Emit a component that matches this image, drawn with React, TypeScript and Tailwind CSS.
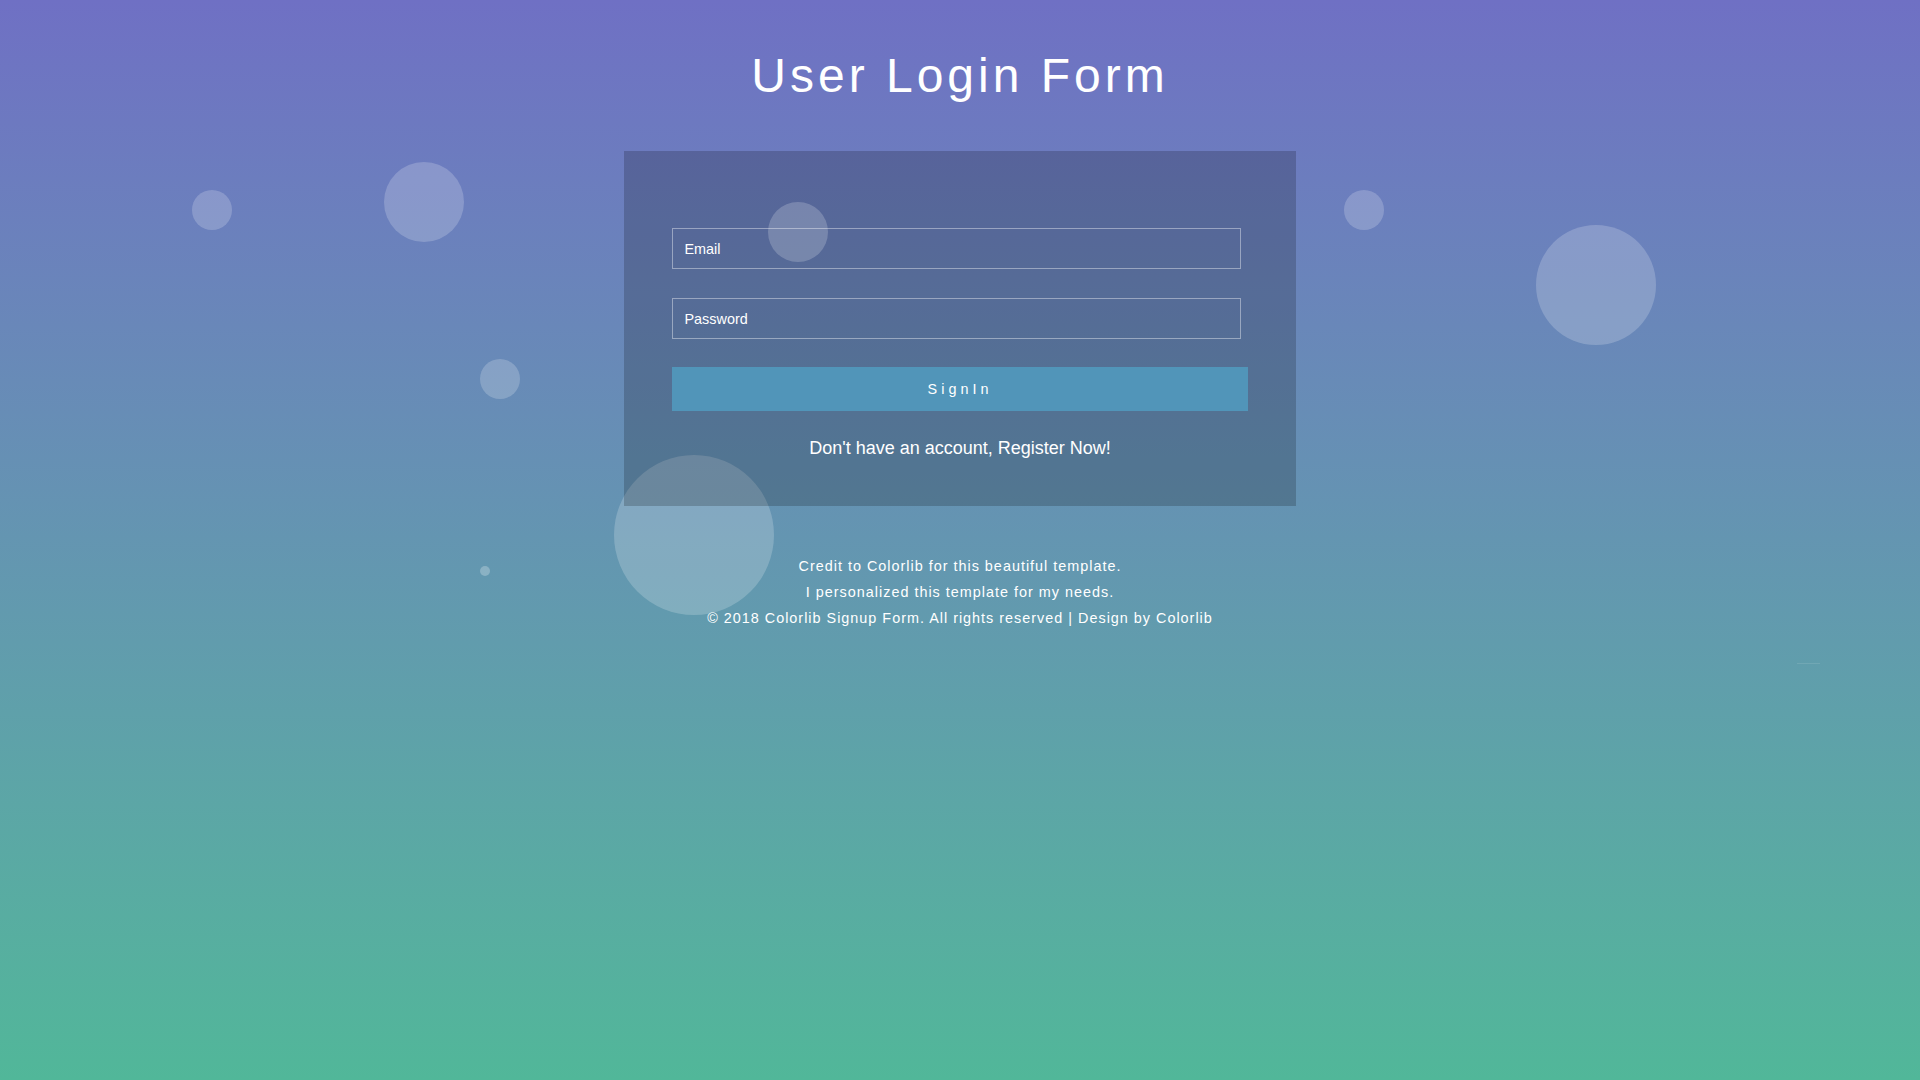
import React from "react";

const bubbleAbove = [
  { l: 192, t: 190, d: 40, o: "bg-white/20" },
  { l: 384, t: 162, d: 80, o: "bg-white/20" },
  { l: 480, t: 359, d: 40, o: "bg-white/20" },
  { l: 768, t: 202, d: 60, o: "bg-white/20" },
  { l: 480, t: 566, d: 10, o: "bg-white/25" },
  { l: 1344, t: 190, d: 40, o: "bg-white/20" },
  { l: 1536, t: 225, d: 120, o: "bg-white/20" },
];

export default function App() {
  return (
    <div
      className="relative w-full h-[1080px] overflow-hidden bg-gradient-to-b from-[#6f70c4] to-[#51b799] text-white"
      style={{ fontFamily: '"Liberation Sans", Arial, Helvetica, sans-serif' }}
    >
      {/* bubble behind the form */}
      <div className="absolute left-[614px] top-[455px] w-[160px] h-[160px] rounded-full bg-white/20" />

      <div className="relative flex flex-col items-center">
        <h1 className="pt-[48px] text-[48px] leading-[56px] tracking-[4px] font-normal text-white">
          User Login Form
        </h1>

        <div className="mt-[47px] w-[672px] h-[355px] bg-[rgba(0,0,0,0.19)] px-[48px] pt-[77px]">
          <form className="flex flex-col" onSubmit={(e) => e.preventDefault()}>
            <input
              type="text"
              placeholder="Email"
              className="block w-[569px] h-[41px] border border-white/40 bg-transparent px-[11.5px] text-[14.4px] text-white placeholder:text-white outline-none"
            />
            <input
              type="password"
              placeholder="Password"
              className="block mt-[29px] w-[569px] h-[41px] border border-white/40 bg-transparent px-[11.5px] text-[14.4px] text-white placeholder:text-white outline-none"
            />
            <button
              type="submit"
              className="mt-[28px] w-[576px] h-[44px] pt-[2px] bg-[#5195b9] text-[14.4px] tracking-[4px] text-white"
            >
              SignIn
            </button>
          </form>
          <p className="mt-[25px] text-center text-[18px] leading-[24px] text-white">
            Don't have an account, Register Now!
          </p>
        </div>

        <div className="mt-[48px] text-center text-[14.4px] leading-[25.92px] tracking-[1px] text-white">
          <p>Credit to Colorlib for this beautiful template.</p>
          <p>I personalized this template for my needs.</p>
          <p>© 2018 Colorlib Signup Form. All rights reserved | Design by Colorlib</p>
        </div>
      </div>

      {bubbleAbove.map((b, i) => (
        <div
          key={i}
          className={`absolute rounded-full ${b.o}`}
          style={{ left: b.l, top: b.t, width: b.d, height: b.d }}
        />
      ))}
      <div className="absolute left-[1797px] top-[663px] w-[23px] h-px bg-white/10" />
    </div>
  );
}
